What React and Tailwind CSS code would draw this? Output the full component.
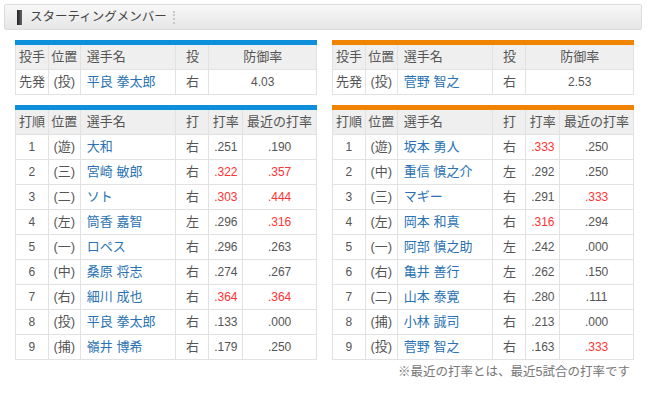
import React from 'react';

const font = { fontFamily: '"Liberation Sans", "Noto Sans CJK JP", sans-serif' };

const cols = ['w-[33px]', 'w-[32px]', 'w-[96px]', 'w-[33px]', 'w-[34px]', 'w-[74px]'];
const pCols = ['w-[33px]', 'w-[32px]', 'w-[96px]', 'w-[33px]', 'w-[108px]'];

const giants = {
  pitcher: { name: '菅野 智之', hand: '右', era: '2.53' },
  lineup: [
    ['1', '遊', '坂本 勇人', '右', '.333', '.250', true, false],
    ['2', '中', '重信 慎之介', '左', '.292', '.250', false, false],
    ['3', '三', 'マギー', '右', '.291', '.333', false, true],
    ['4', '左', '岡本 和真', '右', '.316', '.294', true, false],
    ['5', '一', '阿部 慎之助', '左', '.242', '.000', false, false],
    ['6', '右', '亀井 善行', '左', '.262', '.150', false, false],
    ['7', '二', '山本 泰寛', '右', '.280', '.111', false, false],
    ['8', '捕', '小林 誠司', '右', '.213', '.000', false, false],
    ['9', '投', '菅野 智之', '右', '.163', '.333', false, true],
  ],
};

const hawks = {
  pitcher: { name: '平良 拳太郎', hand: '右', era: '4.03' },
  lineup: [
    ['1', '遊', '大和', '右', '.251', '.190', false, false],
    ['2', '三', '宮崎 敏郎', '右', '.322', '.357', true, true],
    ['3', '二', 'ソト', '右', '.303', '.444', true, true],
    ['4', '左', '筒香 嘉智', '左', '.296', '.316', false, true],
    ['5', '一', 'ロペス', '右', '.296', '.263', false, false],
    ['6', '中', '桑原 将志', '右', '.274', '.267', false, false],
    ['7', '右', '細川 成也', '右', '.364', '.364', true, true],
    ['8', '投', '平良 拳太郎', '右', '.133', '.000', false, false],
    ['9', '捕', '嶺井 博希', '右', '.179', '.250', false, false],
  ],
};

const Cell = ({ w, children, className = '' }) => (
  <div className={`${w} h-full flex items-center border-r border-[#e2e2e2] ${className}`}>{children}</div>
);

const Team = ({ data, bar }) => (
  <div className="w-[302px] flex flex-col">
    <div className={`h-[5px] ${bar}`} />
    <div className="border-l border-[#e2e2e2]">
      <div className="flex h-[25px] bg-[#efefef] border-b border-[#e2e2e2] text-[13px] text-[#555]">
        <Cell w={pCols[0]} className="justify-center">投手</Cell>
        <Cell w={pCols[1]} className="justify-center">位置</Cell>
        <Cell w={pCols[2]} className="pl-[6px]">選手名</Cell>
        <Cell w={pCols[3]} className="justify-center">投</Cell>
        <Cell w={pCols[4]} className="justify-center">防御率</Cell>
      </div>
      <div className="flex h-[25px] bg-white border-b border-[#e2e2e2] text-[13px] text-[#555]">
        <Cell w={pCols[0]} className="justify-center">先発</Cell>
        <Cell w={pCols[1]} className="justify-center">(投)</Cell>
        <Cell w={pCols[2]} className="pl-[6px] text-[#2a72b3]">{data.pitcher.name}</Cell>
        <Cell w={pCols[3]} className="justify-center">{data.pitcher.hand}</Cell>
        <Cell w={pCols[4]} className="justify-center text-[12px]">{data.pitcher.era}</Cell>
      </div>
    </div>
    <div className={`h-[5px] mt-[10px] ${bar}`} />
    <div className="border-l border-[#e2e2e2]">
      <div className="flex h-[25px] bg-[#efefef] border-b border-[#e2e2e2] text-[13px] text-[#555]">
        <Cell w={cols[0]} className="justify-center">打順</Cell>
        <Cell w={cols[1]} className="justify-center">位置</Cell>
        <Cell w={cols[2]} className="pl-[6px]">選手名</Cell>
        <Cell w={cols[3]} className="justify-center">打</Cell>
        <Cell w={cols[4]} className="justify-center">打率</Cell>
        <Cell w={cols[5]} className="justify-center">最近の打率</Cell>
      </div>
      {data.lineup.map(([n, pos, name, hand, avg, recent, avgHot, recentHot]) => (
        <div key={n} className="flex h-[25px] bg-white border-b border-[#e2e2e2] text-[13px] text-[#555]">
          <Cell w={cols[0]} className="justify-center text-[12px]">{n}</Cell>
          <Cell w={cols[1]} className="justify-center">({pos})</Cell>
          <Cell w={cols[2]} className="pl-[6px] text-[#2a72b3]">{name}</Cell>
          <Cell w={cols[3]} className="justify-center">{hand}</Cell>
          <Cell w={cols[4]} className={`justify-center text-[12px] ${avgHot ? 'text-[#ff3333]' : ''}`}>{avg}</Cell>
          <Cell w={cols[5]} className={`justify-center text-[12px] ${recentHot ? 'text-[#ff3333]' : ''}`}>{recent}</Cell>
        </div>
      ))}
    </div>
  </div>
);

export default function App() {
  return (
    <div className="w-[650px] h-[394px] bg-white pt-[4px] pl-[4px]" style={font}>
      {/* Title */}
      <div className="w-[638px] h-[26px] flex items-center rounded-[2px] border border-[#dcdcdc] bg-gradient-to-b from-[#f8f8f8] via-[#efefef] to-[#e6e6e6] pl-[12px]">
        <div className="w-[5px] h-[15px] bg-gradient-to-r from-[#222] to-[#666]" />
        <span className="ml-[8px] text-[12.5px] text-[#444]">スターティングメンバー</span>
        <div className="ml-[6px] h-[13px] border-l-2 border-dotted border-[#c8c8c8]" />
      </div>

      <div className="flex gap-[15px] pl-[11px] mt-[10px]">
        <Team data={hawks} bar="bg-[#0d8fdc]" />
        <Team data={giants} bar="bg-[#f08300]" />
      </div>

      <div className="w-[626px] text-right text-[12.5px] text-[#777] mt-[3px]">
        ※最近の打率とは、最近5試合の打率です
      </div>
    </div>
  );
}
